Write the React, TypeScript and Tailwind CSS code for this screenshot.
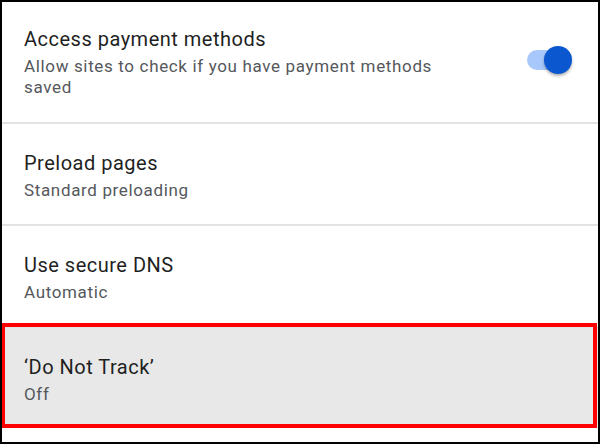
import React from "react";

function Row({
  title,
  subtitle,
  className = "",
  right,
  subWidth,
}: {
  title: string;
  subtitle: string;
  className?: string;
  right?: React.ReactNode;
  subWidth?: string;
}) {
  return (
    <div className={`flex items-start px-[22px] ${className}`}>
      <div className={`flex flex-col ${subWidth ?? "flex-1"}`}>
        <div className="text-[20px] leading-[26px] tracking-[0.5px] text-[#1f1f1f]">{title}</div>
        <div className="mt-[4px] text-[17px] leading-[21px] tracking-[0.65px] text-[#55585c]">{subtitle}</div>
      </div>
      {right}
    </div>
  );
}

function Toggle() {
  return (
    <div className="ml-auto mt-[20px] mr-[4px] flex h-[28px] w-[45px] items-center relative">
      <div className="h-[20px] w-[40px] rounded-full bg-[#a8c7fa]" />
      <div className="absolute right-0 top-0 h-[28px] w-[28px] rounded-full bg-[#0b57d0] shadow-[0_2px_3px_rgba(0,0,0,0.3)]" />
    </div>
  );
}

export default function App() {
  return (
    <div
      className="relative h-[444px] w-[600px] overflow-hidden border-2 border-black bg-white"
      style={{ fontFamily: "Roboto, 'Noto Sans', sans-serif" }}
    >
      <Row
        title="Access payment methods"
        subtitle="Allow sites to check if you have payment methods saved"
        className="h-[120px] pt-[24px]"
        subWidth="w-[440px]"
        right={<Toggle />}
      />
      <div className="h-[2px] bg-[#e3e3e3]" />
      <Row title="Preload pages" subtitle="Standard preloading" className="h-[100px] pt-[26px]" />
      <div className="h-[2px] bg-[#e3e3e3]" />
      <Row title="Use secure DNS" subtitle="Automatic" className="h-[100px] pt-[26px]" />
      <div className="h-[2px] bg-[#e3e3e3]" />
      <Row title="‘Do Not Track’" subtitle="Off" className="h-[100px] pt-[26px] bg-[#e8e8e8]" />
      <div className="pointer-events-none absolute left-[-1px] top-[321px] h-[105px] w-[596px] border-4 border-[#ff0000]" />
    </div>
  );
}
